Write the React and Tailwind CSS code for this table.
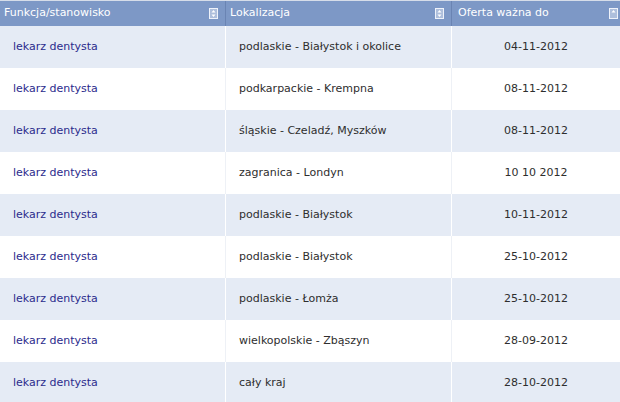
import React from 'react';

const rows = [
  ['lekarz dentysta', 'podlaskie - Białystok i okolice', '04-11-2012'],
  ['lekarz dentysta', 'podkarpackie - Krempna', '08-11-2012'],
  ['lekarz dentysta', 'śląskie - Czeladź, Myszków', '08-11-2012'],
  ['lekarz dentysta', 'zagranica - Londyn', '10 10 2012'],
  ['lekarz dentysta', 'podlaskie - Białystok', '10-11-2012'],
  ['lekarz dentysta', 'podlaskie - Białystok', '25-10-2012'],
  ['lekarz dentysta', 'podlaskie - Łomża', '25-10-2012'],
  ['lekarz dentysta', 'wielkopolskie - Zbąszyn', '28-09-2012'],
  ['lekarz dentysta', 'cały kraj', '28-10-2012'],
];

// small sort icon in the header
const SortIcon = ({ both = true }) => (
  <svg width="9" height="11" viewBox="0 0 9 11" className="shrink-0">
    <rect x="0.5" y="0.5" width="8" height="10" fill="#aebfdc" stroke="#eef2fa" />
    <path d="M4.5 2 L6.5 4.5 L2.5 4.5 Z" fill="#ffffff" />
    {both && <path d="M4.5 9 L6.5 6.5 L2.5 6.5 Z" fill="#ffffff" />}
  </svg>
);

const App = () => {
  return (
    <div className="w-[620px] h-[402px] overflow-hidden bg-white text-[11px]" style={{ fontFamily: '"DejaVu Sans", Verdana, sans-serif' }}>
      <div className="grid grid-cols-[226px_226px_168px] border-t border-[#d6dde9] bg-[#7d98c6] text-white h-[26px]">
        <div className="flex items-center justify-between pl-[4px] pr-[7px] border-r border-[#6a84b3]">
          <span>Funkcja/stanowisko</span>
          <SortIcon />
        </div>
        <div className="flex items-center justify-between pl-[4px] pr-[7px] border-r border-[#6a84b3]">
          <span>Lokalizacja</span>
          <SortIcon />
        </div>
        <div className="flex items-center justify-between pl-[6px] pr-[2px]">
          <span>Oferta ważna do</span>
          <SortIcon both={false} />
        </div>
      </div>

      {rows.map((r, i) => (
        <div
          key={i}
          className={`grid grid-cols-[226px_226px_168px] h-[42px] ${i % 2 === 0 ? 'bg-[#e5ebf5]' : 'bg-white'}`}
        >
          <div className={`flex items-center pl-[13px] pt-[1px] text-[#2b2b8c] border-r ${i % 2 === 0 ? 'border-white' : 'border-[#eef1f6]'}`}>
            {r[0]}
          </div>
          <div className={`flex items-center pl-[13px] pt-[1px] text-[#2e2e2e] border-r ${i % 2 === 0 ? 'border-white' : 'border-[#eef1f6]'}`}>
            {r[1]}
          </div>
          <div className="flex items-center justify-center pt-[1px] text-[#2e2e2e]">{r[2]}</div>
        </div>
      ))}
    </div>
  );
};

export default App;
